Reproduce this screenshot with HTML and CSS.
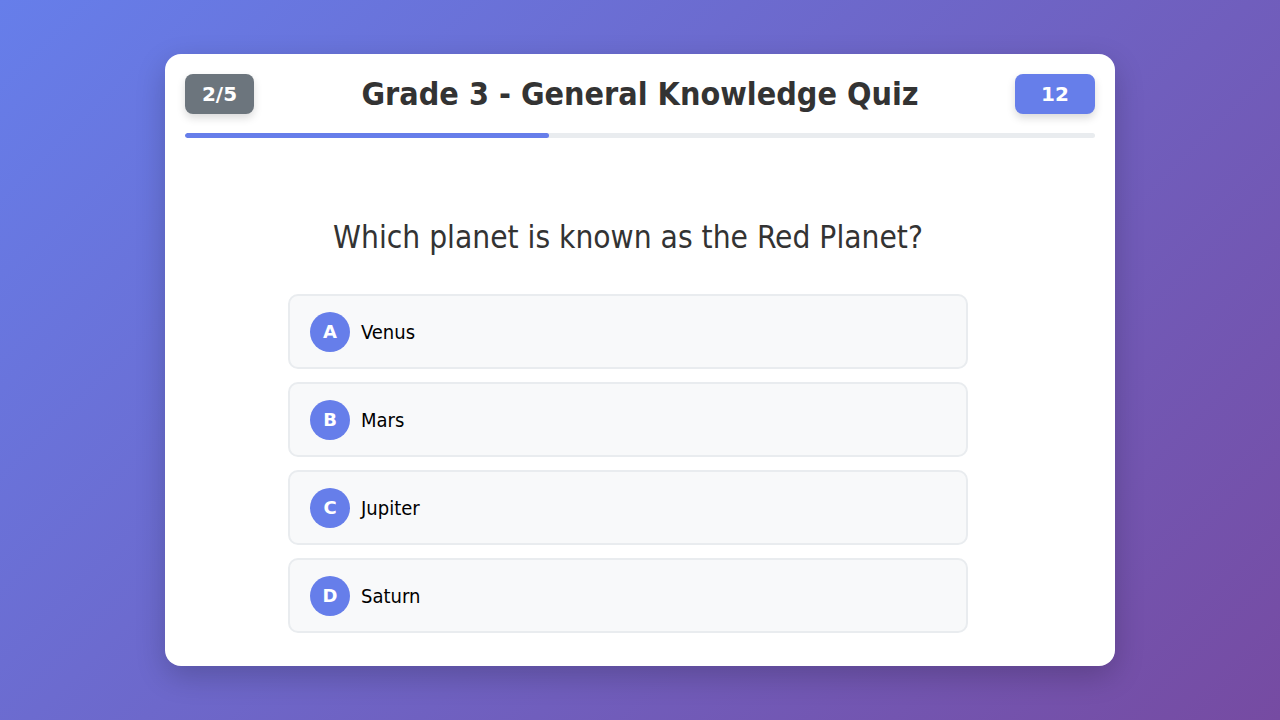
FILE: index.html
```html
<!DOCTYPE html>
<html lang="en">
<head>
<meta charset="utf-8">
<title>Grade 3 - General Knowledge Quiz</title>
<link rel="stylesheet" href="styles.css">
</head>
<body>
<div class="card">
  <div class="header">
    <div class="badge badge-count">2/5</div>
    <h1 class="title">Grade 3 - General Knowledge Quiz</h1>
    <div class="badge badge-timer">12</div>
  </div>
  <div class="progress"><div class="progress-fill" style="width:40%"></div></div>
  <div class="content">
    <div class="question">Which planet is known as the Red Planet?</div>
    <div class="options">
      <div class="option"><span class="letter">A</span><span class="text">Venus</span></div>
      <div class="option"><span class="letter">B</span><span class="text">Mars</span></div>
      <div class="option"><span class="letter">C</span><span class="text">Jupiter</span></div>
      <div class="option"><span class="letter">D</span><span class="text">Saturn</span></div>
    </div>
  </div>
</div>
</body>
</html>
```
FILE: styles.css
```css
* { box-sizing: border-box; }
html, body { margin: 0; height: 100%; }
body {
  font-family: "DejaVu Sans Condensed", "DejaVu Sans", sans-serif;
  background: linear-gradient(135deg, #667eea 0%, #764ba2 100%);
  display: flex;
  align-items: center;
  justify-content: center;
  width: 1280px;
  height: 720px;
}
.card {
  width: 950px;
  height: 612px;
  background: #fff;
  border-radius: 16px;
  padding: 20px;
  box-shadow: 0 10px 30px rgba(0,0,0,0.2);
  display: flex;
  flex-direction: column;
}
.header {
  display: grid;
  grid-template-columns: 1fr auto 1fr;
  align-items: center;
  height: 40px;
}
.badge {
  height: 40px;
  border-radius: 8px;
  color: #fff;
  font-family: "DejaVu Sans", sans-serif;
  font-weight: bold;
  font-size: 20px;
  display: flex;
  align-items: center;
  justify-content: center;
  box-shadow: 0 4px 8px rgba(0,0,0,0.15);
}
.badge-count { width: 69px; background: #6c757d; justify-self: start; }
.badge-timer { width: 80px; background: #667eea; justify-self: end; }
.title {
  margin: 0;
  font-size: 32px;
  font-weight: bold;
  color: #333;
  text-align: center;
}
.progress {
  margin-top: 19px;
  height: 5px;
  background: #e9ecef;
  border-radius: 3px;
  overflow: hidden;
}
.progress-fill { height: 100%; background: #667eea; border-radius: 3px; }
.content {
  margin-right: 24px;
}
.question {
  margin-top: 80px;
  text-align: center;
  font-size: 31.4px;
  color: #333;
  line-height: 38px;
}
.options {
  margin: 38px auto 0;
  width: 680px;
  display: flex;
  flex-direction: column;
  gap: 13px;
}
.option {
  height: 75px;
  background: #f8f9fa;
  border: 2px solid #e9ecef;
  border-radius: 10px;
  padding: 0 20px;
  display: flex;
  align-items: center;
  gap: 11px;
}
.letter {
  width: 40px;
  height: 40px;
  border-radius: 50%;
  background: #667eea;
  color: #fff;
  font-family: "DejaVu Sans", sans-serif;
  font-weight: bold;
  font-size: 18px;
  display: flex;
  align-items: center;
  justify-content: center;
}
.text { font-size: 20px; color: #000; }
```
